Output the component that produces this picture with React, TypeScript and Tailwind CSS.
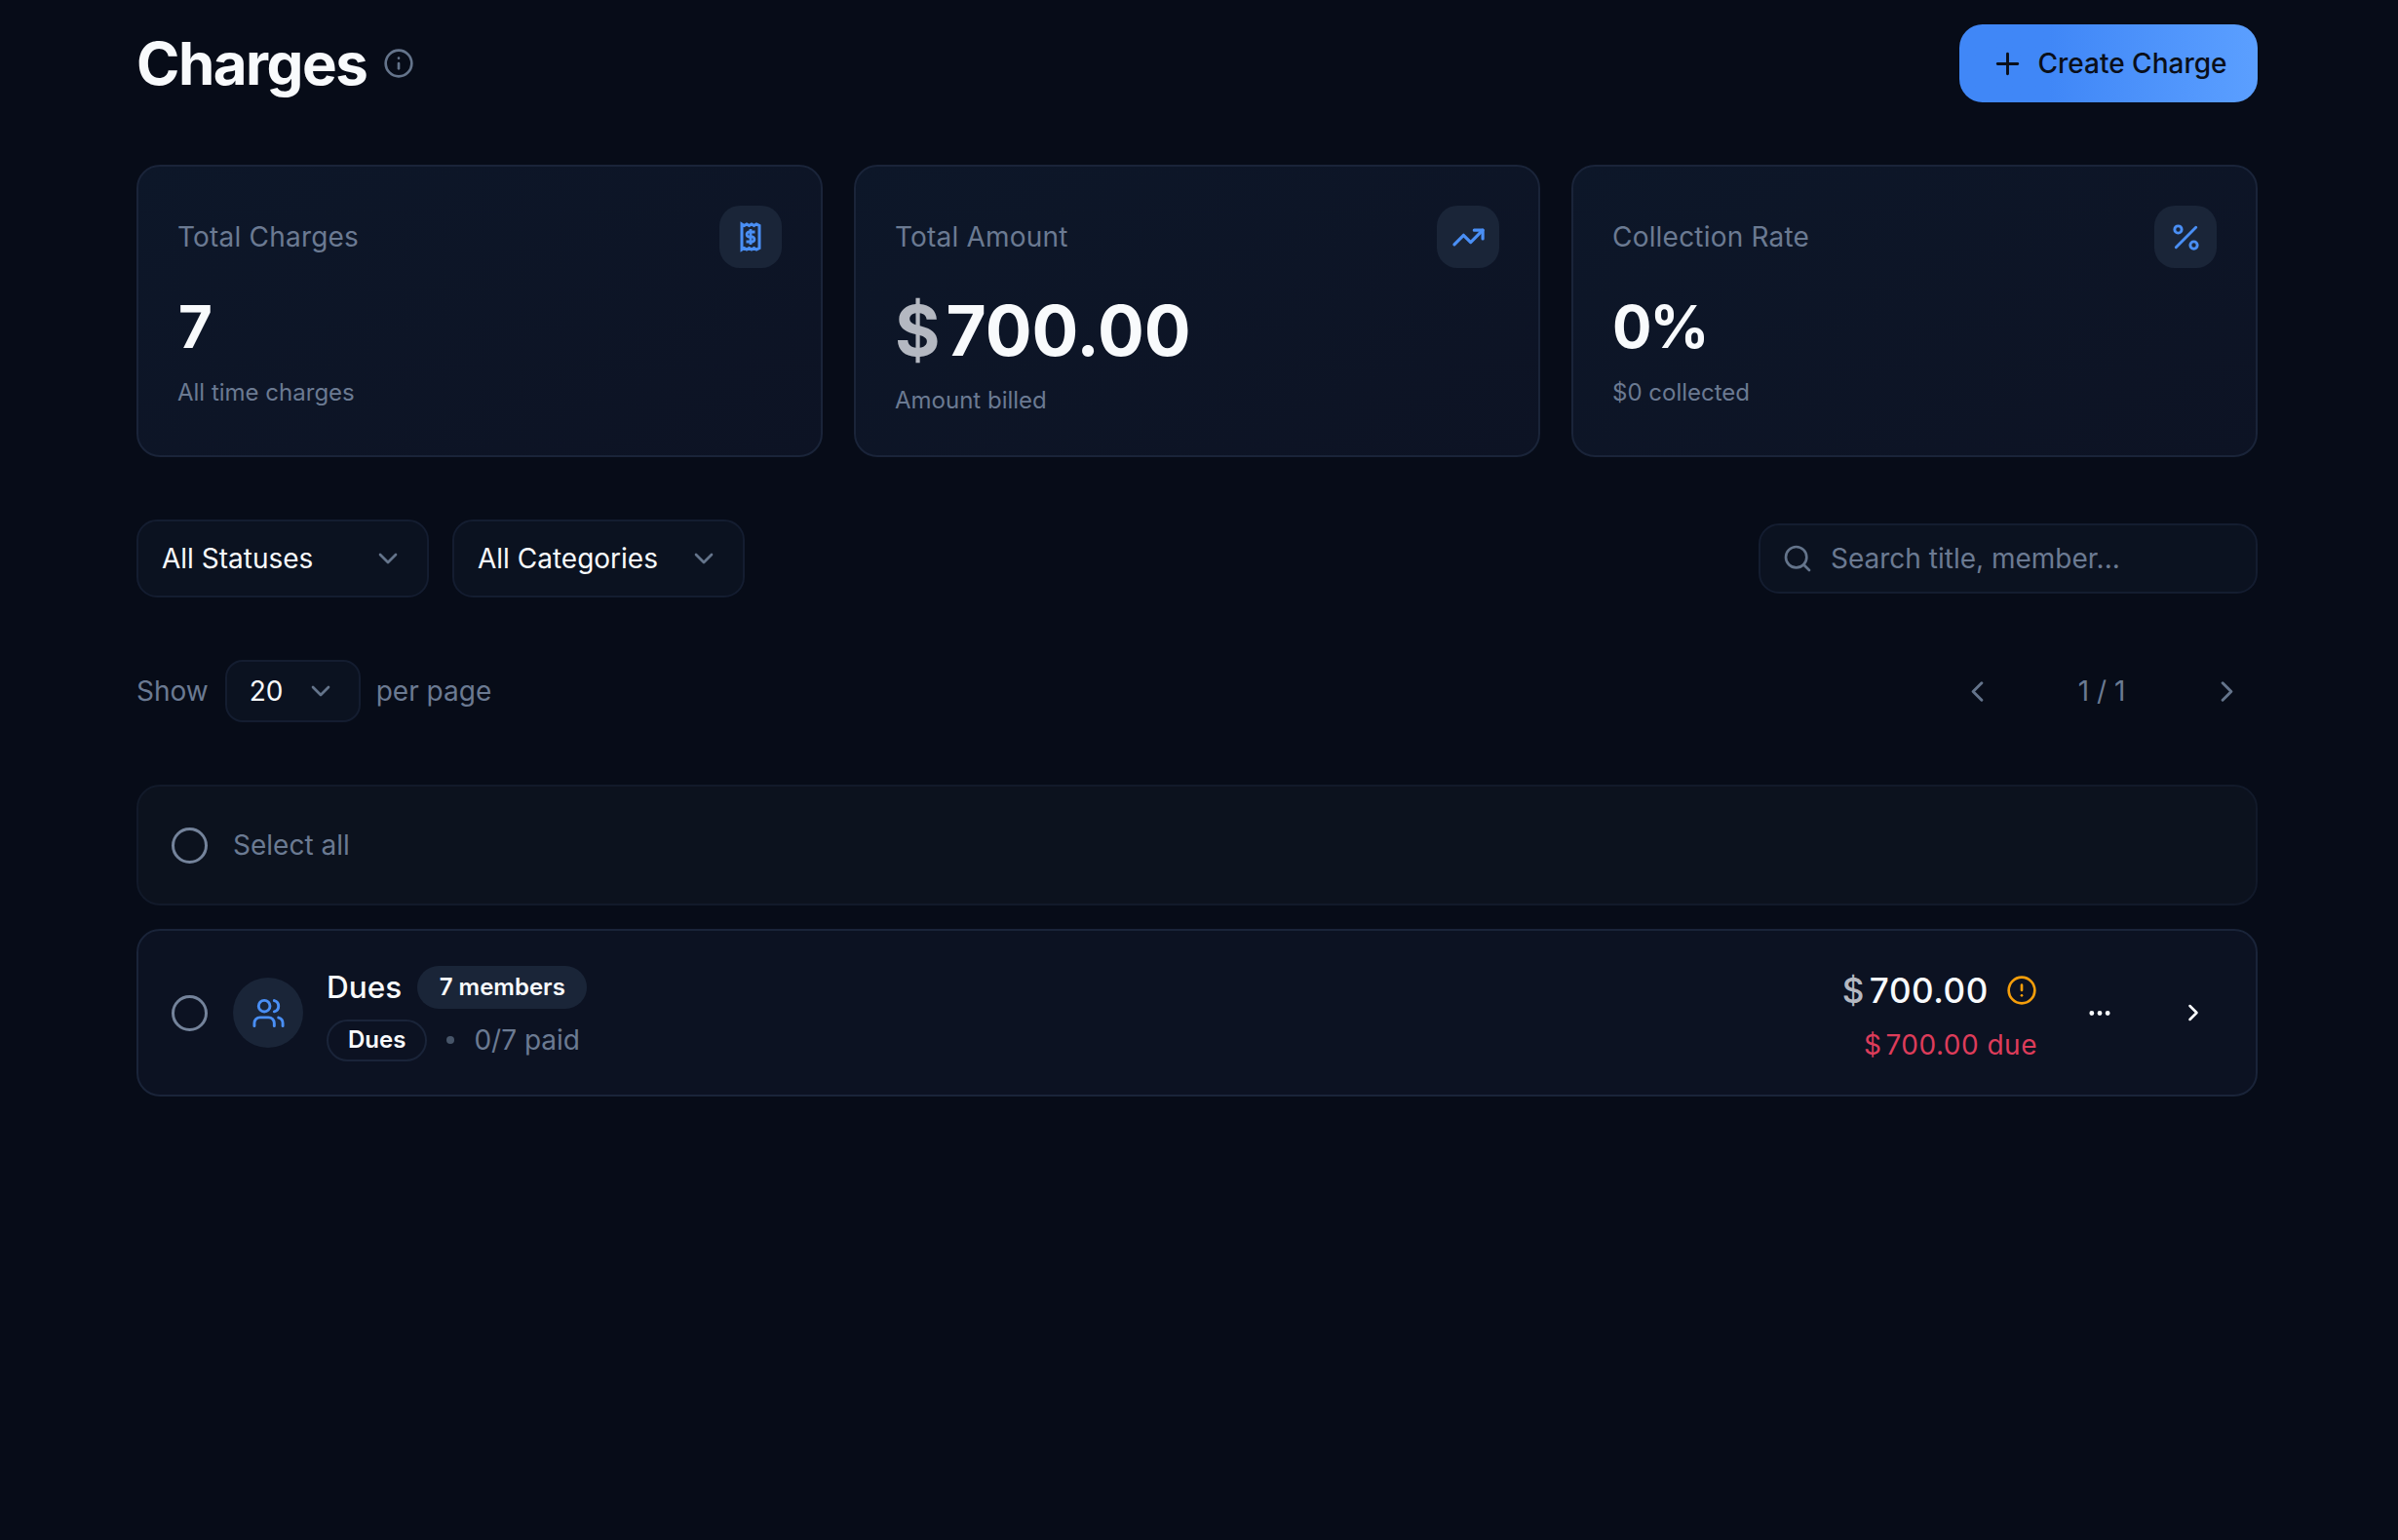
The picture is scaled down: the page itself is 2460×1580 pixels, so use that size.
import { ChevronDown, ChevronLeft, ChevronRight, CircleAlert, Ellipsis, Info, Percent, Plus, Search, TrendingUp, Users } from "lucide-react";

function ReceiptIcon() {
  return (
    <svg width="32" height="32" viewBox="0 0 32 32" fill="none" stroke="#4a8ff5" strokeWidth="3" strokeLinejoin="miter">
      <path d="M7 3 L9.5 4.5 L12 3 L14.5 4.5 L17 3 L19.5 4.5 L22 3 L25 4.5 V27.5 L22 29 L19.5 27.5 L17 29 L14.5 27.5 L12 29 L9.5 27.5 L7 29 Z" />
      <path d="M20.5 11 H14 a2.6 2.6 0 0 0 0 5 h4 a2.6 2.6 0 0 1 0 5 H11.5 M16 8 v16" strokeWidth="2.8" />
    </svg>
  );
}

function StatCard(props: { label: string; value: React.ReactNode; sub: string; icon: React.ReactNode }) {
  return (
    <div className="rounded-[24px] border-2 border-[#1a2439] bg-gradient-to-br from-[#0d1729] to-[#0d1324] p-[40px] h-[300px]">
      <div className="flex items-center justify-between h-[64px]">
        <span className="text-[28px] tracking-[0.2px] text-[#6b7a92]">{props.label}</span>
        <div className="w-[64px] h-[64px] rounded-[21px] bg-[#1a2538] flex items-center justify-center">{props.icon}</div>
      </div>
      <div className="mt-[24px]">{props.value}</div>
      <div className="text-[24px] leading-[36px] text-[#6b7a92] mt-[14px]">{props.sub}</div>
    </div>
  );
}

function Dropdown(props: { label: string }) {
  return (
    <div className="w-[300px] h-[80px] rounded-[21px] border-2 border-[#141d30] bg-[#0b1220] flex items-center justify-between pl-[24px] pr-[24px]">
      <span className="text-[28px] text-[#f8fafc]">{props.label}</span>
      <ChevronDown size={32} color="#64748b" strokeWidth={2} />
    </div>
  );
}

export default function App() {
  return (
    <div className="min-h-[1580px] bg-[#070c18] pl-[140px] pr-[144px] font-['Inter',sans-serif]">
      <div className="flex items-center justify-between pt-[25px] h-[105px]">
        <div className="flex items-center gap-[17px]">
          <h1 className="text-[60px] font-bold leading-[80px] tracking-[-1.5px] text-[#f8fafc]">Charges</h1>
          <Info size={32} color="#64748b" strokeWidth={2} />
        </div>
        <button className="w-[306px] h-[80px] rounded-[24px] bg-gradient-to-r from-[#4087f7] from-30% to-[#5b9fff] flex items-center justify-center gap-[14px] text-[28px] font-medium text-[#0a0f1a]">
          <Plus size={35} strokeWidth={2} />
          Create Charge
        </button>
      </div>

      <div className="grid grid-cols-3 gap-[32px] mt-[64px]">
        <StatCard
          label="Total Charges"
          value={<div className="text-[60px] leading-[72px] font-bold tracking-[-2px] pl-[1px] text-[#f8fafc]">7</div>}
          sub="All time charges"
          icon={<ReceiptIcon />}
        />
        <StatCard
          label="Total Amount"
          value={
            <div className="text-[71px] leading-[80px] font-bold text-[#f8fafc]">
              <span className="text-[#b4b8c1]">$</span>
              <span className="ml-[6px]">700.00</span>
            </div>
          }
          sub="Amount billed"
          icon={<TrendingUp size={35} color="#4a8ff5" strokeWidth={2.2} />}
        />
        <StatCard
          label="Collection Rate"
          value={<div className="text-[60px] leading-[72px] font-bold tracking-[-2px] text-[#f8fafc]">0%</div>}
          sub="$0 collected"
          icon={<Percent size={35} color="#4a8ff5" strokeWidth={2} />}
        />
      </div>

      <div className="flex items-center justify-between mt-[64px]">
        <div className="flex gap-[24px]">
          <Dropdown label="All Statuses" />
          <Dropdown label="All Categories" />
        </div>
        <div className="w-[512px] h-[72px] rounded-[21px] border-2 border-[#141d30] bg-[#0b1220] flex items-center gap-[18px] pl-[22px]">
          <Search size={32} color="#64748b" strokeWidth={2} />
          <span className="text-[28px] text-[#6b7a92]">Search title, member...</span>
        </div>
      </div>

      <div className="flex items-center justify-between mt-[64px] h-[64px]">
        <div className="flex items-center text-[28px] text-[#6b7a92]">
          <span>Show</span>
          <div className="ml-[17px] w-[139px] h-[64px] rounded-[18px] border-2 border-[#141d30] bg-[#0b1220] flex items-center justify-between pl-[23px] pr-[23px]">
            <span className="text-[#f8fafc]">20</span>
            <ChevronDown size={32} color="#64748b" strokeWidth={2} />
          </div>
          <span className="ml-[16px]">per page</span>
        </div>
        <div className="flex items-center text-[28px] text-[#6b7a92]">
          <div className="w-[64px] flex justify-center"><ChevronLeft size={35} color="#64748b" /></div>
          <span className="w-[192px] text-center">1 / 1</span>
          <div className="w-[64px] flex justify-center"><ChevronRight size={35} color="#64748b" /></div>
        </div>
      </div>

      <div className="mt-[64px] h-[124px] rounded-[24px] border-2 border-[#121a2a] bg-[#0c121e] flex items-center pl-[34px] gap-[26px]">
        <div className="w-[37px] h-[37px] rounded-full border-[3px] border-[#74839b]" />
        <span className="text-[28px] text-[#6b7a92]">Select all</span>
      </div>

      <div className="mt-[24px] h-[172px] rounded-[24px] border-2 border-[#1a2439] bg-[#0c1222] flex items-center pl-[34px] pr-[50px]">
        <div className="w-[37px] h-[37px] rounded-full border-[3px] border-[#74839b]" />
        <div className="ml-[26px] w-[72px] h-[72px] rounded-full bg-[#1a2538] flex items-center justify-center">
          <Users size={35} color="#4a8ff5" strokeWidth={2} />
        </div>
        <div className="ml-[24px]">
          <div className="flex items-center gap-[16px]">
            <span className="text-[31.5px] font-medium text-[#f8fafc]">Dues</span>
            <span className="h-[44px] px-[22.5px] rounded-full bg-[#1a2538] flex items-center text-[24px] font-semibold text-[#f8fafc]">7 members</span>
          </div>
          <div className="flex items-center mt-[9px]">
            <span className="h-[43px] px-[20px] rounded-full border-2 border-[#1a2439] flex items-center text-[24px] font-semibold text-[#f8fafc]">Dues</span>
            <span className="ml-[20px] w-[8px] h-[8px] rounded-full bg-[#475569]" />
            <span className="ml-[20px] text-[28px] text-[#6b7a92]">0/7 paid</span>
          </div>
        </div>
        <div className="ml-auto flex flex-col items-end pt-[6px]">
          <div className="flex items-center gap-[18px] h-[42px]">
            <span className="text-[35px] font-medium text-[#f8fafc] tracking-[0.6px]">
              <span className="text-[#b4b8c1]">$</span>
              <span className="ml-[5px]">700.00</span>
            </span>
            <CircleAlert size={32} color="#f59e0b" strokeWidth={2} />
          </div>
          <span className="mt-[18px] text-[28px] leading-[34px] text-[#dd3c5a] tracking-[0.5px]">
            $<span className="ml-[4px]">700.00 due</span>
          </span>
        </div>
        <div className="ml-[50px] w-[28px] flex justify-center"><Ellipsis size={35} color="#f8fafc" strokeWidth={2.2} /></div>
        <div className="ml-[68px] w-[28px] flex justify-center"><ChevronRight size={32} color="#f8fafc" strokeWidth={2.2} /></div>
      </div>
    </div>
  );
}
